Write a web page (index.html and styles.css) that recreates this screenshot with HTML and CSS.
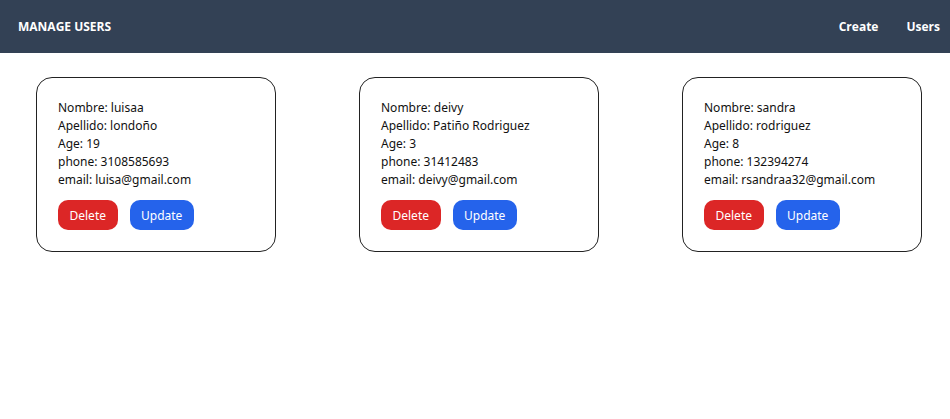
FILE: index.html
```html
<!DOCTYPE html>
<html>
<head>
<meta charset="utf-8">
<link rel="stylesheet" href="styles.css">
</head>
<body>
<header class="nav">
  <div class="brand">MANAGE USERS</div>
  <nav class="links">
    <a class="link">Create</a>
    <a class="link">Users</a>
  </nav>
</header>
<main class="cards">
  <div class="card">
    <div class="info">
      <p>Nombre: luisaa</p>
      <p>Apellido: londoño</p>
      <p>Age: 19</p>
      <p>phone: 3108585693</p>
      <p>email: luisa@gmail.com</p>
    </div>
    <div class="actions">
      <button class="btn delete">Delete</button>
      <button class="btn update">Update</button>
    </div>
  </div>
  <div class="card">
    <div class="info">
      <p>Nombre: deivy</p>
      <p>Apellido: Patiño Rodriguez</p>
      <p>Age: 3</p>
      <p>phone: 31412483</p>
      <p>email: deivy@gmail.com</p>
    </div>
    <div class="actions">
      <button class="btn delete">Delete</button>
      <button class="btn update">Update</button>
    </div>
  </div>
  <div class="card">
    <div class="info">
      <p>Nombre: sandra</p>
      <p>Apellido: rodriguez</p>
      <p>Age: 8</p>
      <p>phone: 132394274</p>
      <p>email: rsandraa32@gmail.com</p>
    </div>
    <div class="actions">
      <button class="btn delete">Delete</button>
      <button class="btn update">Update</button>
    </div>
  </div>
</main>
</body>
</html>
```
FILE: styles.css
```css
* { box-sizing: border-box; }
body {
  margin: 0;
  font-family: "Noto Sans", sans-serif;
  font-size: 12px;
  line-height: 18px;
  color: #111;
  background: #fff;
}
.nav {
  height: 53px;
  background: #334155;
  display: flex;
  align-items: center;
  justify-content: space-between;
  padding: 0 10px 0 18px;
  color: #fff;
}
.brand {
  font-family: "Open Sans", sans-serif;
  font-weight: 700;
  font-size: 12px;
}
.links {
  display: flex;
  gap: 28px;
}
.link {
  font-family: "Open Sans", sans-serif;
  font-weight: 700;
  font-size: 12px;
}
.cards {
  display: flex;
  gap: 83px;
  padding: 24px 0 0 36px;
}
.card {
  width: 240px;
  border: 1px solid #222;
  border-radius: 16px;
  padding: 21px 21px 21px;
}
.info p { margin: 0; }
.actions {
  display: flex;
  gap: 12px;
  margin-top: 11px;
}
.btn {
  font-family: "Noto Sans", sans-serif;
  font-size: 12px;
  color: #fff;
  border: none;
  border-radius: 10px;
  height: 30px;
  padding: 0 11.5px;
}
.delete { background: #dc2626; }
.update { background: #2563eb; }
```
